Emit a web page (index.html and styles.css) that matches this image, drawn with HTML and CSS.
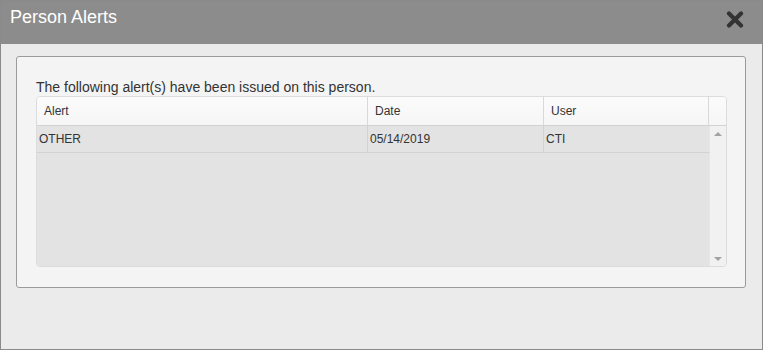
FILE: index.html
```html
<!DOCTYPE html>
<html lang="en">
<head>
    <meta charset="UTF-8">
    <title>Person Alerts</title>
    <link rel="stylesheet" href="styles.css">
</head>
<body>

    <div class="dialog">
        <div class="dialog-header">
            <span class="dialog-title">Person Alerts</span>
            <button class="close-btn" title="Close">
                <svg width="18" height="17" viewBox="0 0 18 17">
                    <path d="M3 2.5 L15 14.5 M15 2.5 L3 14.5" stroke="#333" stroke-width="4.2" stroke-linecap="round"/>
                </svg>
            </button>
        </div>
        <div class="dialog-body">
            <div class="panel">
                <p class="intro">The following alert(s) have been issued on this person.</p>
                <div class="grid">
                    <div class="grid-head">
                        <div class="col-alert">Alert</div>
                        <div class="col-date">Date</div>
                        <div class="col-user">User</div>
                        <div class="col-scroll"></div>
                    </div>
                    <div class="grid-content">
                        <div class="rows">
                            <div class="row">
                                <div class="col-alert">OTHER</div>
                                <div class="col-date">05/14/2019</div>
                                <div class="col-user">CTI</div>
                            </div>
                        </div>
                        <div class="scrollbar">
                            <span class="arrow up"></span>
                            <span class="arrow down"></span>
                        </div>
                    </div>
                </div>
            </div>
        </div>
    </div>

</body>
</html>
```

FILE: styles.css
```css
body {
    margin: 0;
    font-family: "Liberation Sans", Arial, sans-serif;
    color: #333;
}
.dialog {
    width: 763px;
    height: 350px;
    box-sizing: border-box;
    border: 1px solid #8a8a8a;
    background-color: #ebebeb;
    display: flex;
    flex-direction: column;
}
.dialog-header {
    height: 43px;
    background-color: #8c8c8c;
    display: flex;
    align-items: flex-start;
    justify-content: space-between;
    padding: 0 18px 0 9px;
}
.dialog-title {
    color: #fff;
    font-size: 18px;
    margin-top: 6px;
}
.close-btn {
    background: none;
    border: none;
    padding: 0;
    margin-top: 10px;
    cursor: pointer;
    display: flex;
}
.dialog-body {
    padding: 12px 16px 0 15px;
}
.panel {
    height: 230px;
    border: 1px solid #9a9a9a;
    border-radius: 3px;
    background-color: #f4f4f4;
    padding: 0 18px 0 19px;
}
.intro {
    margin: 0;
    padding-top: 21px;
    height: 18px;
    font-size: 14px;
    line-height: 18px;
}
.grid {
    height: 171px;
    box-sizing: border-box;
    border: 1px solid #dcdcdc;
    border-radius: 4px;
    overflow: hidden;
    display: flex;
    flex-direction: column;
    font-size: 12px;
}
.grid-head,
.row {
    display: grid;
    grid-template-columns: 331px 176px 165px 17px;
}
.row {
    grid-template-columns: 331px 176px 165px;
    height: 27px;
    border-bottom: 1px solid #d2d2d2;
    box-sizing: border-box;
}
.grid-head {
    height: 28px;
    background: linear-gradient(#fbfbfb, #f6f6f6);
    border-bottom: 1px solid #d2d2d2;
}
.grid-head > div {
    padding-left: 7px;
    line-height: 28px;
    border-right: 1px solid #d9d9d9;
}
.grid-head > div.col-scroll {
    border-right: none;
}
.row > div {
    padding-left: 2px;
    line-height: 26px;
    border-right: 1px solid #d2d2d2;
}
.row > div.col-user {
    border-right: none;
}
.grid-content {
    flex: 1;
    display: flex;
    background-color: #e3e3e3;
}
.rows {
    flex: 1;
}
.scrollbar {
    width: 17px;
    background-color: #f1f1f1;
    border-left: 1px solid #e6e6e6;
    box-sizing: border-box;
    display: flex;
    flex-direction: column;
    justify-content: space-between;
    align-items: center;
    padding: 6px 0 5px 0;
}
.arrow {
    width: 0;
    height: 0;
    border-left: 4px solid transparent;
    border-right: 4px solid transparent;
}
.arrow.up {
    border-bottom: 4px solid #a3a3a3;
}
.arrow.down {
    border-top: 4px solid #a3a3a3;
}
```
